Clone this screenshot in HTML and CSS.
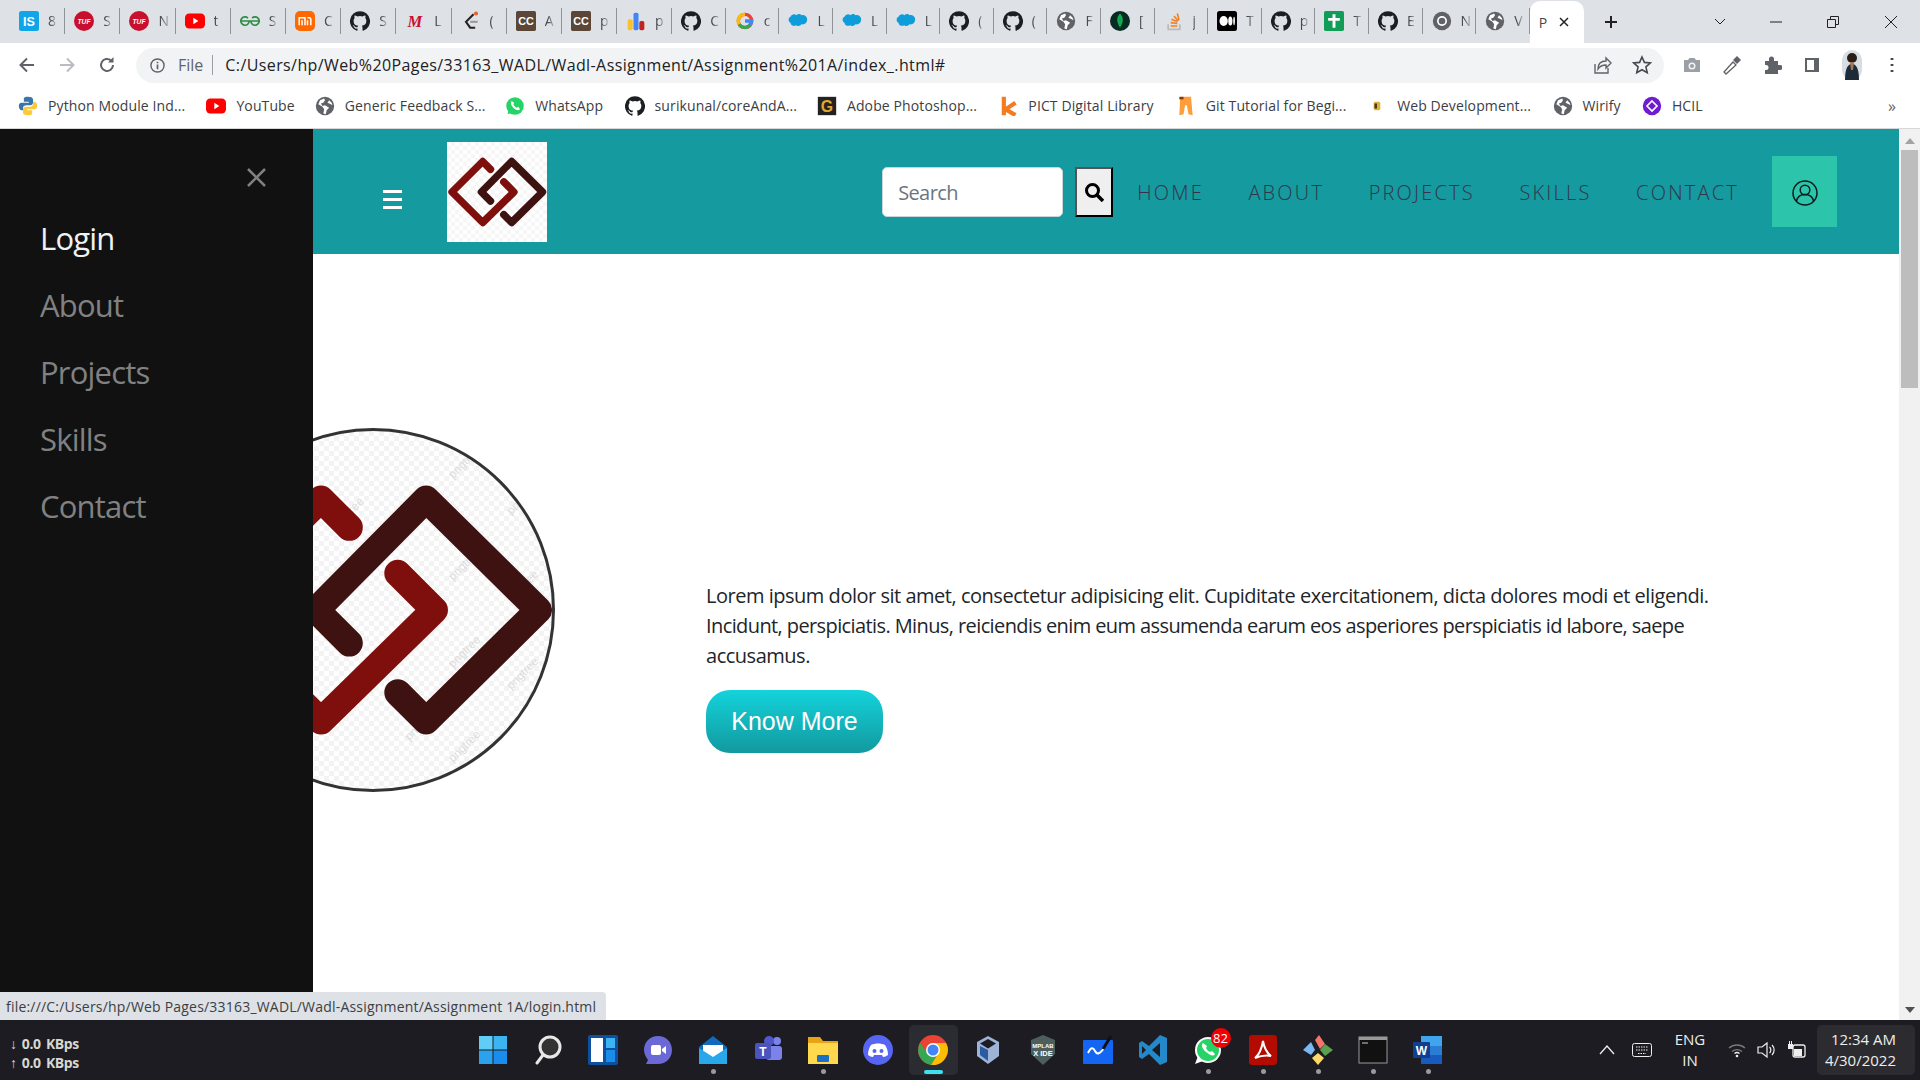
FILE: index.html
```html
<!DOCTYPE html>
<html lang="en">
<head>
<meta charset="utf-8">
<title>Portfolio</title>
<link rel="stylesheet" href="styles.css">
</head>
<body>
<svg class="defs" width="0" height="0" aria-hidden="true">
  <symbol id="gh" viewBox="0 0 24 24"><path fill="#1b1f23" d="M12 .3a12 12 0 0 0-3.8 23.4c.6.1.8-.3.8-.6v-2c-3.3.7-4-1.6-4-1.6-.6-1.4-1.4-1.8-1.4-1.8-1-.7.1-.7.1-.7 1.2 0 1.9 1.2 1.9 1.2 1 1.8 2.8 1.3 3.5 1 0-.8.4-1.3.7-1.6-2.7-.3-5.5-1.3-5.5-6 0-1.2.5-2.3 1.3-3.1-.2-.4-.6-1.6 0-3.2 0 0 1-.3 3.4 1.2a11.5 11.5 0 0 1 6 0c2.3-1.5 3.3-1.2 3.3-1.2.6 1.6.2 2.8 0 3.2.9.8 1.3 1.9 1.3 3.2 0 4.6-2.8 5.6-5.5 5.9.5.4.9 1 .9 2.2v3.3c0 .3.1.7.8.6A12 12 0 0 0 12 .3"/></symbol>
  <symbol id="globe" viewBox="0 0 24 24"><circle cx="12" cy="12" r="11" fill="#5f6368"/><path fill="#fff" d="M11 3 6 5 4 10l5 3 2 3-1 5 3 1 1-5 3-3-5-3-3 1-2-3 3-1 2-3zm6 2-2 3 4 2 2 1-1-3z"/></symbol>
  <symbol id="sf" viewBox="0 0 24 24"><path fill="#0d9dda" d="M10 5c2-2 5-2 6 0 3-1 7 1 7 5s-3 7-7 6c-1 2-4 3-6 1-3 2-7 0-7-3-3-1-3-6 0-7 1-3 5-4 7-2z"/></symbol>
  <symbol id="yt" viewBox="0 0 24 24"><rect y="3" width="24" height="18" rx="5" fill="#f00"/><path fill="#fff" d="m10 8 6 4-6 4z"/></symbol>
  <symbol id="logo" viewBox="0 0 100 100">
    <path fill="none" stroke="#3f1212" stroke-width="7.400" stroke-linecap="round" stroke-linejoin="round" d="M43.500 59.100 34.400 50 64.600 19.500 95.500 50 64.600 80.500 56.800 72.700"/>
    <path fill="none" stroke="#7f0f0c" stroke-width="7.400" stroke-linecap="round" stroke-linejoin="round" d="M56.800 39.900 66.900 50 35.700 80.500 5 50 35.700 19.500 43.500 27.300"/>
  </symbol>
</svg>

<header class="tabstrip">
  <div class="tab"><svg class="fav" viewBox="0 0 24 24"><rect width="24" height="24" rx="3" fill="#0ea5e9"/><text x="12" y="18" font-size="15" font-weight="700" fill="#fff" text-anchor="middle" font-family="Liberation Sans">IS</text></svg><span>8</span></div>
  <div class="tab"><svg class="fav" viewBox="0 0 24 24"><circle cx="12" cy="12" r="12" fill="#c8102e"/><text x="12" y="15" font-size="8" font-weight="700" font-style="italic" fill="#fff" text-anchor="middle" font-family="Liberation Sans">TUF</text></svg><span>S</span></div>
  <div class="tab"><svg class="fav" viewBox="0 0 24 24"><circle cx="12" cy="12" r="12" fill="#c8102e"/><text x="12" y="15" font-size="8" font-weight="700" font-style="italic" fill="#fff" text-anchor="middle" font-family="Liberation Sans">TUF</text></svg><span>N</span></div>
  <div class="tab"><svg class="fav"><use href="#yt"/></svg><span>t</span></div>
  <div class="tab"><svg class="fav" viewBox="0 0 24 24"><path d="M1 12h22M11 12a5 5 0 1 1-1.500-3.500M13 12a5 5 0 1 0 1.500-3.500" fill="none" stroke="#2f8d46" stroke-width="2"/></svg><span>S</span></div>
  <div class="tab"><svg class="fav" viewBox="0 0 24 24"><rect width="24" height="24" rx="6" fill="#ff6900"/><path d="M5 17V8h7v9M8.500 11v6M15 8h2a2 2 0 0 1 2 2v7M15 11v6" fill="none" stroke="#fff" stroke-width="1.800"/></svg><span>C</span></div>
  <div class="tab"><svg class="fav"><use href="#gh"/></svg><span>S</span></div>
  <div class="tab"><svg class="fav" viewBox="0 0 24 24"><text x="12" y="19" font-size="20" font-weight="700" font-style="italic" fill="#c8102e" text-anchor="middle" font-family="Liberation Serif">M</text></svg><span>L</span></div>
  <div class="tab"><svg class="fav" viewBox="0 0 24 24"><path d="M15 4 6 13l5 7h6" fill="none" stroke="#222" stroke-width="2.500"/><path d="M11 13h9" stroke="#999" stroke-width="2.500"/><circle cx="18" cy="3" r="2.500" fill="#e8632b"/></svg><span>(</span></div>
  <div class="tab"><svg class="fav" viewBox="0 0 24 24"><rect width="24" height="24" rx="2" fill="#5b4638"/><text x="12" y="17" font-size="13" font-weight="700" fill="#fff" text-anchor="middle" font-family="Liberation Sans">CC</text></svg><span>A</span></div>
  <div class="tab"><svg class="fav" viewBox="0 0 24 24"><rect width="24" height="24" rx="2" fill="#5b4638"/><text x="12" y="17" font-size="13" font-weight="700" fill="#fff" text-anchor="middle" font-family="Liberation Sans">CC</text></svg><span>p</span></div>
  <div class="tab"><svg class="fav" viewBox="0 0 24 24"><rect x="2" y="10" width="6" height="13" rx="2" fill="#fbc02d"/><rect x="9" y="2" width="6" height="21" rx="2" fill="#4285f4"/><rect x="16" y="12" width="6" height="11" rx="2" fill="#c5221f"/></svg><span>p</span></div>
  <div class="tab"><svg class="fav"><use href="#gh"/></svg><span>C</span></div>
  <div class="tab"><svg class="fav" viewBox="0 0 24 24"><circle cx="12" cy="12" r="8" fill="none" stroke="#ea4335" stroke-width="4"/><path d="M12 4a8 8 0 0 0-7 12" fill="none" stroke="#fbbc05" stroke-width="4"/><path d="M5 16a8 8 0 0 0 14-1" fill="none" stroke="#34a853" stroke-width="4"/><path d="M12 12h8a8 8 0 0 1-2 5" fill="none" stroke="#4285f4" stroke-width="4"/></svg><span>c</span></div>
  <div class="tab"><svg class="fav"><use href="#sf"/></svg><span>L</span></div>
  <div class="tab"><svg class="fav"><use href="#sf"/></svg><span>L</span></div>
  <div class="tab"><svg class="fav"><use href="#sf"/></svg><span>L</span></div>
  <div class="tab"><svg class="fav"><use href="#gh"/></svg><span>(</span></div>
  <div class="tab"><svg class="fav"><use href="#gh"/></svg><span>(</span></div>
  <div class="tab"><svg class="fav"><use href="#globe"/></svg><span>F</span></div>
  <div class="tab"><svg class="fav" viewBox="0 0 24 24"><circle cx="12" cy="12" r="12" fill="#062b23"/><path fill="#13aa52" d="M12 3c4 4 5 9 0 17-5-8-4-13 0-17z"/></svg><span>[</span></div>
  <div class="tab"><svg class="fav" viewBox="0 0 24 24"><path d="M5 16v6h14v-6" fill="none" stroke="#bcbbbb" stroke-width="2"/><path d="M8 18h8M8 14l8 1M9 10l7 3M12 6l5 6M16 3l2 8" stroke="#f48024" stroke-width="2"/></svg><span>j</span></div>
  <div class="tab"><svg class="fav" viewBox="0 0 24 24"><rect width="24" height="24" rx="3" fill="#000"/><ellipse cx="8" cy="12" rx="5" ry="6" fill="#fff"/><ellipse cx="16" cy="12" rx="2.500" ry="5.500" fill="#fff"/><ellipse cx="20.500" cy="12" rx="1" ry="5" fill="#fff"/></svg><span>T</span></div>
  <div class="tab"><svg class="fav"><use href="#gh"/></svg><span>p</span></div>
  <div class="tab"><svg class="fav" viewBox="0 0 24 24"><rect width="24" height="24" rx="2" fill="#0f9d58"/><path d="M12 4v16M5 10h14" stroke="#fff" stroke-width="3.500"/></svg><span>T</span></div>
  <div class="tab"><svg class="fav"><use href="#gh"/></svg><span>E</span></div>
  <div class="tab"><svg class="fav" viewBox="0 0 24 24"><circle cx="12" cy="12" r="11" fill="#5f6368"/><circle cx="12" cy="12" r="6" fill="#fff"/><circle cx="12" cy="12" r="4" fill="#5f6368"/></svg><span>N</span></div>
  <div class="tab"><svg class="fav"><use href="#globe"/></svg><span>V</span></div>
  <div class="tab-active"><span>P</span><svg class="close-x" viewBox="0 0 12 12"><path d="M2 2l8 8M10 2l-8 8" stroke="#202124" stroke-width="1.500"/></svg></div>
  <svg class="plus" viewBox="0 0 14 14"><path d="M7 1v12M1 7h12" stroke="#202124" stroke-width="2"/></svg>
  <div class="winctl">
    <svg class="w-chev" viewBox="0 0 12 8"><path d="M1 1l5 5 5-5" fill="none" stroke="#202124"/></svg>
    <svg class="w-min" viewBox="0 0 12 12"><path d="M0 6h12" stroke="#202124"/></svg>
    <svg class="w-max" viewBox="0 0 12 12"><path d="M.5 3.500h8v8h-8zM3.500 3.500v-3h8v8h-3" fill="none" stroke="#202124"/></svg>
    <svg class="w-close" viewBox="0 0 12 12"><path d="M0 0l12 12M12 0L0 12" stroke="#202124"/></svg>
  </div>
</header>

<nav class="toolbar">
  <svg class="tb-nav" viewBox="0 0 20 20"><path d="M17 10H4M10 3.500 3.500 10l6.500 6.500" fill="none" stroke="#5f6368" stroke-width="2"/></svg>
  <svg class="tb-nav" viewBox="0 0 20 20"><path d="M3 10h13M10 3.500l6.500 6.500-6.500 6.500" fill="none" stroke="#b9bcc0" stroke-width="2"/></svg>
  <svg class="tb-nav" viewBox="0 0 20 20"><path d="M16 10a6 6 0 1 1-2-4.500" fill="none" stroke="#5f6368" stroke-width="2"/><path d="M16.500 2v5.500H11z" fill="#5f6368"/></svg>
  <div class="omnibox">
    <svg class="info" viewBox="0 0 16 16"><circle cx="8" cy="8" r="7" fill="none" stroke="#5f6368" stroke-width="1.500"/><path d="M8 7v5M8 4v1.500" stroke="#5f6368" stroke-width="1.800"/></svg>
    <span class="scheme">File</span>
    <span class="url">C:/Users/hp/Web%20Pages/33163_WADL/Wadl-Assignment/Assignment%201A/index_.html#</span>
    <svg class="omni-ico share" viewBox="0 0 20 20"><path d="M3 9v9h13v-5" fill="none" stroke="#5f6368" stroke-width="1.400"/><path d="M6 14c0-5 3-8 8-8V3l5 5-5 5v-3c-4 0-6 1-8 4z" fill="none" stroke="#5f6368" stroke-width="1.400"/></svg>
    <svg class="omni-ico" viewBox="0 0 20 20"><path d="m10 2 2.400 5.400 5.900.6-4.400 3.900 1.300 5.800L10 14.700l-5.200 3 1.300-5.800L1.700 8l5.900-.6z" fill="none" stroke="#45494e" stroke-width="1.600"/></svg>
  </div>
  <div class="ext-row">
    <svg class="ext" viewBox="0 0 20 20"><path fill="#9aa0a6" d="M2 5h4l1.500-2h5L14 5h4v12H2z"/><circle cx="10" cy="11" r="3.500" fill="#f1f3f4"/><circle cx="10" cy="11" r="2" fill="#9aa0a6"/></svg>
    <svg class="ext" viewBox="0 0 20 20"><path d="M3 18 2 17l9-10 3 3-10 9z" fill="none" stroke="#5f6368" stroke-width="1.300"/><path d="m11 5 4-4 4 4-4 4z" fill="#5f6368"/></svg>
    <svg class="ext" viewBox="0 0 20 20"><path fill="#5f6368" d="M3 6h4V4a2.500 2.500 0 0 1 5 0v2h4v4h2a2.500 2.500 0 0 1 0 5h-2v4H3v-4h1a2.500 2.500 0 0 0 0-5H3z"/></svg>
    <svg class="ext" viewBox="0 0 20 20"><path fill="#5f6368" d="M3 3h14v14H3z"/><path fill="#fff" d="M5 5h7v10H5z"/></svg>
    <svg class="ext avatar" viewBox="0 0 20 30"><rect width="20" height="30" rx="10" fill="#d8dde2"/><circle cx="10" cy="8" r="5" fill="#2a1d18"/><path d="M3 30c0-12 3-16 7-16s7 4 7 16z" fill="#1d2b38"/><path d="M8 12h4l-1 8H9z" fill="#a5775a"/></svg>
    <svg class="ext" viewBox="0 0 20 20"><path d="M10 3v2M10 9v2M10 15v2" stroke="#45494e" stroke-width="2.800"/></svg>
  </div>
</nav>

<div class="bookmarks">
  <div class="bm bm-py"><svg class="bm-ico" viewBox="0 0 24 24"><path fill="#3776ab" d="M12 1c-5 0-5 2-5 3v3h6v1H4c-2 0-3 2-3 4s1 5 3 5h2v-3c0-2 2-3 4-3h5c1 0 3-1 3-3V4c0-2-3-3-6-3z"/><path fill="#fcc93a" d="M12 23c5 0 5-2 5-3v-3h-6v-1h9c2 0 3-2 3-4s-1-5-3-5h-2v3c0 2-2 3-4 3h-5c-1 0-3 1-3 3v4c0 2 3 3 6 3z"/></svg><span>Python Module Ind...</span></div>
  <div class="bm bm-yt"><svg class="bm-ico"><use href="#yt"/></svg><span>YouTube</span></div>
  <div class="bm bm-fb"><svg class="bm-ico"><use href="#globe"/></svg><span>Generic Feedback S...</span></div>
  <div class="bm bm-wa"><svg class="bm-ico" viewBox="0 0 24 24"><circle cx="12" cy="12" r="10.500" fill="#25d366"/><path d="m3 22 2-6 4 4z" fill="#25d366"/><path fill="#fff" d="M8 6c-2 2-1 5 2 8s6 4 8 2l-2-3-2 1c-2-1-3-2-4-4l1-2z"/></svg><span>WhatsApp</span></div>
  <div class="bm bm-gh"><svg class="bm-ico"><use href="#gh"/></svg><span>surikunal/coreAndA...</span></div>
  <div class="bm bm-ad"><svg class="bm-ico" viewBox="0 0 24 24"><rect x="1" y="1" width="22" height="22" fill="#222"/><text x="12" y="19" font-size="19" font-weight="700" fill="#e2a72e" text-anchor="middle" font-family="Liberation Sans">G</text></svg><span>Adobe Photoshop...</span></div>
  <div class="bm bm-pi"><svg class="bm-ico" viewBox="0 0 24 24"><path d="M7 1v22M21 8 9 16l12 7" fill="none" stroke="#f47b20" stroke-width="5"/></svg><span>PICT Digital Library</span></div>
  <div class="bm bm-git"><svg class="bm-ico" viewBox="0 0 24 24"><path fill="#ff9d3a" d="M5 1h13l2 22-5-1-2-11h-2L9 22l-5 1z"/><path fill="#7a3b10" d="M4 1h5v3H4z"/></svg><span>Git Tutorial for Begi...</span></div>
  <div class="bm bm-web"><svg class="bm-ico" viewBox="0 0 24 24"><rect x="8" y="7" width="8" height="10" rx="2" fill="#e0b23c"/><path d="M9 9h3v6H9z" fill="#4a3a1a"/></svg><span>Web Development...</span></div>
  <div class="bm bm-wi"><svg class="bm-ico"><use href="#globe"/></svg><span>Wirify</span></div>
  <div class="bm bm-hc"><svg class="bm-ico" viewBox="0 0 24 24"><circle cx="12" cy="12" r="11" fill="#6f1bd0"/><path d="m12 6 6 6-6 6-6-6z" fill="none" stroke="#fff" stroke-width="2"/></svg><span>HCIL</span></div>
  <span class="bm-more">»</span>
</div>

<div class="page">
  <aside class="sidebar">
    <svg class="side-close" viewBox="0 0 19 19"><path d="M1 1l17 17M18 1 1 18" stroke="#818181" stroke-width="2.500"/></svg>
    <a class="side-link side-active">Login</a>
    <a class="side-link">About</a>
    <a class="side-link">Projects</a>
    <a class="side-link">Skills</a>
    <a class="side-link">Contact</a>
  </aside>
  <main class="main">
    <div class="site-header">
      <div class="burger"><i></i><i></i><i></i></div>
      <div class="site-logo"><svg class="logo-svg" viewBox="0 0 100 100"><use href="#logo" width="100" height="100"/></svg></div>
      <form class="search">
        <div class="search-input">Search</div>
        <div class="search-btn"><svg viewBox="0 0 20 20" class="search-ico"><circle cx="8.500" cy="8.500" r="6" fill="none" stroke="#000" stroke-width="3"/><path d="m13 13 6 6" stroke="#000" stroke-width="3.500"/></svg></div>
      </form>
      <ul class="nav">
        <li>HOME</li><li>ABOUT</li><li>PROJECTS</li><li>SKILLS</li><li>CONTACT</li>
      </ul>
      <div class="user-box"><svg class="user-ico" viewBox="0 0 26 26"><circle cx="13" cy="13" r="12" fill="none" stroke="#0b1d1d" stroke-width="1.500"/><circle cx="13" cy="10" r="4.800" fill="none" stroke="#0b1d1d" stroke-width="1.500"/><path d="M4.500 21c1-4.500 4-6.500 8.500-6.500s7.500 2 8.500 6.500" fill="none" stroke="#0b1d1d" stroke-width="1.500"/></svg></div>
    </div>
    <section class="hero">
      <div class="hero-img">
        <svg class="logo-svg" viewBox="0.820 0.820 98.360 98.360">
          <g class="wm" font-size="3.200" font-family="Liberation Sans">
            <text transform="translate(12 18) rotate(-45)">pngtree</text>
            <text transform="translate(40 28) rotate(-45)">pngtree</text>
            <text transform="translate(72 14) rotate(-45)">pngtree</text>
            <text transform="translate(88 24) rotate(-45)">pngtree</text>
            <text transform="translate(72 42) rotate(-45)">pngtree</text>
            <text transform="translate(88 48) rotate(-45)">pngtree</text>
            <text transform="translate(72 66) rotate(-45)">pngtree</text>
            <text transform="translate(44 70) rotate(-45)">pngtree</text>
            <text transform="translate(88 72) rotate(-45)">pngtree</text>
            <text transform="translate(60 86) rotate(-45)">pngtree</text>
            <text transform="translate(72 92) rotate(-45)">pngtree</text>
          </g>
          <use href="#logo" width="100" height="100"/>
        </svg>
      </div>
      <div class="hero-text">
        <p class="hero-p">Lorem ipsum dolor sit amet, consectetur adipisicing elit. Cupiditate exercitationem, dicta dolores modi et eligendi.<br><span class="hero-tight">Incidunt, perspiciatis. Minus, reiciendis enim eum assumenda earum eos asperiores perspiciatis id labore, saepe</span><br>accusamus.</p>
        <a class="hero-btn">Know More</a>
      </div>
    </section>
  </main>
  <div class="scrollbar">
    <i class="arrow-up"></i>
    <div class="thumb"></div>
    <i class="arrow-down"></i>
  </div>
  <div class="status">file:///C:/Users/hp/Web Pages/33163_WADL/Wadl-Assignment/Assignment 1A/login.html</div>
</div>

<footer class="taskbar">
  <div class="netspeed"><span>↓ 0.0 KBps</span><span>↑ 0.0 KBps</span></div>
  <div class="tb-icons">
    <div class="ti"><svg viewBox="0 0 30 30"><path fill="#5fcdf5" d="M1 1h13.500v13.500H1z"/><path fill="#3db4f2" d="M15.500 1H29v13.500H15.500z"/><path fill="#2aa2ee" d="M1 15.500h13.500V29H1z"/><path fill="#1a8ceb" d="M15.500 15.500H29V29H15.500z"/></svg></div>
    <div class="ti"><svg viewBox="0 0 30 30"><circle cx="17" cy="12" r="10" fill="#333" stroke="#e8e8e8" stroke-width="3"/><path d="M10 20 4 28" stroke="#e8e8e8" stroke-width="3" stroke-linecap="round"/></svg></div>
    <div class="ti"><svg viewBox="0 0 30 30"><rect width="30" height="30" rx="2" fill="#0e4f9e"/><rect x="3" y="3" width="12" height="24" fill="#fff"/><rect x="18" y="3" width="9" height="10" fill="#3db4f2"/><rect x="18" y="15" width="9" height="12" fill="#1a8ceb"/></svg></div>
    <div class="ti"><svg viewBox="0 0 30 30"><path fill="#6b69d6" d="M15 1c8 0 14 6 14 14s-6 14-14 14H3l2-4c-2-3-4-6-4-10C1 7 7 1 15 1z"/><rect x="8" y="10" width="10" height="10" rx="2" fill="#fff"/><path fill="#fff" d="m19 14 4-3v8l-4-3z"/></svg></div>
    <div class="ti"><svg viewBox="0 0 30 30"><path fill="#0f6cbd" d="M15 1 29 12v17H1V12z"/><path fill="#fff" d="M5 10h20v8l-10 6-10-6z"/><path fill="#28a8ea" d="m1 13 14 9 14-9v16H1z"/></svg></div>
    <div class="ti"><svg viewBox="0 0 30 30"><circle cx="24" cy="6" r="4" fill="#7b83eb"/><circle cx="16" cy="6" r="5" fill="#5059c9"/><rect x="13" y="11" width="16" height="14" rx="3" fill="#7b83eb"/><rect x="2" y="8" width="16" height="16" rx="2" fill="#4b53bc"/><text x="10" y="21" font-size="12" font-weight="700" fill="#fff" text-anchor="middle" font-family="Liberation Sans">T</text></svg></div>
    <div class="ti"><svg viewBox="0 0 30 30"><path fill="#e8a317" d="M0 2h12l3 4h15v6H0z"/><path fill="#ffd84d" d="M0 8h30v21H0z"/><rect x="9" y="20" width="12" height="7" rx="1" fill="#1a6fc9"/></svg></div>
    <div class="ti"><svg viewBox="0 0 30 30"><circle cx="15" cy="15" r="15" fill="#5865f2"/><path fill="#fff" d="M8 10c4-2 10-2 14 0 2 3 3 6 3 10-2 1-3 2-5 2l-1-2h-8l-1 2c-2 0-3-1-5-2 0-4 1-7 3-10z"/><circle cx="11.500" cy="16" r="2" fill="#5865f2"/><circle cx="18.500" cy="16" r="2" fill="#5865f2"/></svg></div>
    <div class="ti ti-active"><svg viewBox="0 0 30 30"><circle cx="15" cy="15" r="15" fill="#ea4335"/><path fill="#34a853" d="M2 8a15 15 0 0 0 11 22l7-11H10z"/><path fill="#fbbc05" d="M28 8H15v7l5 4-7 11a15 15 0 0 0 15-22z"/><circle cx="15" cy="15" r="7" fill="#fff"/><circle cx="15" cy="15" r="5.500" fill="#4285f4"/></svg></div>
    <div class="ti"><svg viewBox="0 0 30 30"><path d="m15 1 11 6v14l-11 8-11-8V7z" fill="#9db4d6"/><path d="m15 4 8 4.500-8 5-8-5z" fill="#1c1c22"/><path d="M15 15v11l-8-6v-9z" fill="#2c5aa0"/></svg></div>
    <div class="ti"><svg viewBox="0 0 30 30"><path d="m15 0 12 5v14l-12 11L3 19V5z" fill="#4d5f5d"/><text x="15" y="13" font-size="6" font-weight="700" fill="#fff" text-anchor="middle" font-family="Liberation Sans">MPLAB</text><text x="15" y="21" font-size="7.500" font-weight="700" fill="#fff" text-anchor="middle" font-family="Liberation Sans">X IDE</text></svg></div>
    <div class="ti"><svg viewBox="0 0 30 30"><rect y="5" width="30" height="24" rx="1" fill="#1466f2"/><path d="M5 18c3-6 5-6 7-2s5 3 9-3" fill="none" stroke="#fff" stroke-width="2"/><path d="m20 14 8-13" stroke="#111" stroke-width="3"/></svg></div>
    <div class="ti"><svg viewBox="0 0 30 30"><path fill="#2489ca" d="M22 0 29 3v24l-7 3-11-11-7 5-3-2V8l3-2 7 5z"/><path fill="#1c1c22" d="M22 8v14l-8-7z"/><path fill="#1c1c22" d="m4 11 4 4-4 4z"/></svg></div>
    <div class="ti ti-wa"><svg viewBox="0 0 30 30"><circle cx="15" cy="15" r="13" fill="#fff"/><circle cx="15" cy="15" r="11" fill="#25d366"/><path d="m2 29 3-8 5 5z" fill="#fff"/><path fill="#fff" d="M10 8c-2 2-1 6 3 9s7 5 9 2l-3-3-2 1c-2-1-3-2-4-4l1-2z"/></svg><b class="badge">82</b></div>
    <div class="ti"><svg viewBox="0 0 30 30"><rect x="1" width="28" height="30" rx="3" fill="#b30b00"/><path d="M15 6c-1 6-3 13-8 17 5-2 11-3 16-2-4-3-7-9-8-15z" fill="none" stroke="#fff" stroke-width="2"/></svg></div>
    <div class="ti"><svg viewBox="0 0 30 30"><path fill="#f4736b" d="m16 0 6 9-5 5-5-9z"/><path fill="#7ab8f5" d="m8 7 4 8-4 5-8-5z"/><path fill="#59a14f" d="m22 9 8 6-8 6-5-6z"/><path fill="#ffd967" d="m15 18 6 5-6 7-6-7z"/></svg></div>
    <div class="ti"><svg viewBox="0 0 30 30"><rect x="1" y="2" width="28" height="26" fill="#111" stroke="#999"/><path d="M1 2h28v3H1z" fill="#999"/><path d="M4 8h6" stroke="#ccc"/></svg></div>
    <div class="ti"><svg viewBox="0 0 30 30"><path fill="#41a5ee" d="M8 1h21v10H8z"/><path fill="#2b7cd3" d="M8 11h21v9H8z"/><path fill="#185abd" d="M8 20h21v9H8z"/><rect y="7" width="17" height="16" rx="1" fill="#103f91"/><text x="8.500" y="20" font-size="12" font-weight="700" fill="#fff" text-anchor="middle" font-family="Liberation Sans">W</text></svg></div>
  </div>
  <div class="tray">
    <svg class="tr-ico" viewBox="0 0 18 18"><path d="m2 13 7-8 7 8" fill="none" stroke="#eee" stroke-width="1.300"/></svg>
    <svg class="tr-ico kbd" viewBox="0 0 20 18"><rect x=".5" y="2.500" width="19" height="13" rx="2" fill="none" stroke="#eee"/><path d="M4 6h12M4 9h12M6 12.500h8" stroke="#eee" stroke-dasharray="1.500 1"/></svg>
    <div class="lang"><span>ENG</span><span>IN</span></div>
    <svg class="tr-ico wifi" viewBox="0 0 20 18"><path d="M2 7a12 12 0 0 1 16 0M5 10.500a8 8 0 0 1 10 0" fill="none" stroke="#777" stroke-width="1.400"/><path d="M7.500 12.500a4 4 0 0 1 5 0" fill="none" stroke="#eee" stroke-width="1.400"/><circle cx="10" cy="15" r="1.300" fill="#eee"/></svg>
    <svg class="tr-ico vol" viewBox="0 0 20 18"><path d="M1 6h4l5-4v14l-5-4H1z" fill="none" stroke="#eee" stroke-width="1.200"/><path d="M12.500 6a4 4 0 0 1 0 6M15 4a7 7 0 0 1 0 10" fill="none" stroke="#eee" stroke-width="1.200"/></svg>
    <svg class="tr-ico batt" viewBox="0 0 20 18"><rect x="6" y="4" width="12" height="12" rx="2" fill="none" stroke="#eee" stroke-width="1.300"/><path fill="#eee" d="M7 8h8v7H7zM1 3h5v5H1zM2 0h1v3H2zM4 0h1v3H4z"/></svg>
    <div class="clock"><span>12:34 AM</span><span>4/30/2022</span></div>
  </div>
</footer>
</body>
</html>
```
FILE: styles.css
```css
* { box-sizing: border-box; }
html, body { margin: 0; height: 100%; overflow: hidden; }
body { width: 1920px; height: 1080px; display: flex; flex-direction: column; font-family: "Open Sans", "Noto Sans", sans-serif; background: #fff; color: #202124; }
.defs { position: absolute; }
a { display: block; }

/* Browser tab strip */
.tabstrip { height: 43px; background: #dee1e6; display: flex; align-items: center; padding-left: 10px; flex: none; }
.tab { width: 53.6px; height: 26px; display: flex; align-items: center; gap: 9px; padding-left: 9px; border-right: 1px solid #8f9297; font-size: 14px; color: #45484d; flex: none; margin-top: -2px; }
.tab:nth-child(-n+12) { width: 55.2px; }
.tab span { -webkit-mask-image: linear-gradient(90deg, #000 30%, rgba(0,0,0,.25)); mask-image: linear-gradient(90deg, #000 30%, rgba(0,0,0,.25)); }
.fav { width: 20px; height: 20px; flex: none; }
.tab-active { width: 54px; height: 43px; background: #fff; border-radius: 10px 10px 0 0; display: flex; align-items: center; gap: 11px; padding-left: 9px; font-size: 14px; color: #45484d; flex: none; margin-top: 1px; }
.close-x { width: 12px; height: 12px; }
.plus { width: 14px; height: 14px; margin-left: 20px; }
.winctl { margin-left: auto; display: flex; align-items: center; padding-right: 23px; }
.winctl svg { height: 12px; width: 12px; }
.w-min { margin-left: 44px; }
.w-max { margin-left: 45px; }
.w-close { margin-left: 46px; }

/* Browser toolbar */
.toolbar { height: 42px; background: #fff; display: flex; align-items: center; padding-left: 17px; flex: none; padding-top: 2px; }
.tb-nav { width: 20px; height: 20px; margin-right: 20px; flex: none; }
.omnibox { width: 1528px; height: 35px; margin-left: -1px; background: #f1f3f4; border-radius: 18px; display: flex; align-items: center; padding-left: 14px; padding-right: 12px; flex: none; }
.info { width: 15px; height: 15px; flex: none; }
.scheme { font-size: 16px; color: #5f6368; margin-left: 13px; padding-right: 9px; border-right: 1px solid #9aa0a6; line-height: 20px; }
.url { font-size: 16px; letter-spacing: .4px; color: #202124; margin-left: 12px; white-space: nowrap; }
.omni-ico { width: 20px; height: 20px; flex: none; margin-left: 20px; }
.share { margin-left: auto; }
.ext-row { display: flex; align-items: center; margin-left: 18px; }
.ext { width: 20px; height: 20px; margin-right: 20px; flex: none; }
.avatar { height: 30px; }

/* Bookmarks */
.bookmarks { height: 44px; background: #fff; display: flex; align-items: center; border-bottom: 1px solid #d5d7da; flex: none; font-size: 14px; letter-spacing: .12px; color: #3c4043; padding: 0 0 2px 18px; white-space: nowrap; }
.bm { display: flex; align-items: center; gap: 10px; flex: none; margin-right: 20.4px; }
.bm-ico { width: 20px; height: 20px; flex: none; }
.bm span { display: block; }
.bm-py span { width: 138px; }
.bm-yt span { width: 58px; }
.bm-fb span { width: 140px; }
.bm-wa span { width: 69px; }
.bm-gh span { width: 142px; }
.bm-ad span { width: 131px; }
.bm-pi span { width: 127px; }
.bm-git span { width: 141px; }
.bm-web span { width: 135px; }
.bm-wi span { width: 39px; }
.bm-hc span { width: 31px; }
.bm-more { margin-left: auto; margin-right: 24px; font-size: 16px; color: #5f6368; }

/* Page */
.page { flex: 1; min-height: 0; display: flex; position: relative; overflow: hidden; }
.sidebar { width: 313px; flex: none; background: #111; position: relative; z-index: 2; padding: 39px 0 0 40px; display: flex; flex-direction: column; }
.side-close { width: 19px; height: 19px; align-self: flex-start; margin-left: 207px; margin-bottom: 18px; flex: none; }
.side-link { font-size: 31px; letter-spacing: -.8px; line-height: 67px; color: #818181; flex: none; }
.side-active { color: #f1f1f1; }
.main { flex: 1; min-width: 0; display: flex; flex-direction: column; }
.site-header { height: 125px; background: #149a9f; display: flex; align-items: center; padding: 0 62px 0 70px; flex: none; }
.burger { width: 19px; margin-top: 15px; display: flex; flex-direction: column; gap: 5px; flex: none; }
.burger i { display: block; height: 3px; background: #fff; }
.site-logo { width: 100px; height: 100px; margin-left: 45px; background: repeating-conic-gradient(#f6f6f6 0 25%, #fff 0 50%) 0 0/8px 8px; flex: none; }
.logo-svg { width: 100%; height: 100%; display: block; }
.search { display: flex; margin-left: auto; gap: 12px; flex: none; }
.search-input { width: 181px; height: 50px; background: #fff; border: 1px solid #ced4da; border-radius: 5px; font-size: 20px; letter-spacing: -.6px; line-height: 50px; padding-left: 15px; color: #6c757d; }
.search-btn { width: 38px; height: 50px; background: #efefef; border: 2px outset #000; display: flex; align-items: center; justify-content: center; }
.search-ico { width: 20px; height: 20px; }
.nav { list-style: none; margin: 2px 0 0 24px; padding: 0; display: flex; gap: 44.5px; font-size: 20px; font-weight: 300; letter-spacing: 2.2px; color: #34354a; flex: none; }
.user-box { width: 65px; height: 71px; margin-left: 33px; background: #2cc4ab; display: flex; align-items: center; justify-content: center; flex: none; }
.user-ico { width: 26px; height: 26px; margin-top: 2px; }
.hero { flex: 1; min-height: 0; display: flex; align-items: flex-start; }
.hero-img { width: 364px; height: 364px; margin: 174px 0 0 -122px; border-radius: 50%; border: 3px solid #333; overflow: hidden; flex: none; background: repeating-conic-gradient(#f3f3f3 0 25%, #fff 0 50%) 0 0/10px 10px; }
.wm { fill: #dcdcdc; }
.hero-text { margin: 327px 0 0 151px; flex: none; }
.hero-p { margin: 0 0 19px; font-size: 20px; letter-spacing: -.48px; line-height: 30px; color: #212529; white-space: nowrap; }
.hero-tight { letter-spacing: -.6px; }
.hero-btn { width: 177px; height: 63px; border-radius: 24px; background: linear-gradient(#14d3db, #12999f); color: #fff; font-family: "Liberation Sans", sans-serif; font-size: 25px; line-height: 63px; text-align: center; }
.scrollbar { width: 21px; background: #f1f1f1; flex: none; display: flex; flex-direction: column; align-items: center; padding-top: 9px; padding-bottom: 7px; }
.arrow-up { width: 0; height: 0; border: 5px solid transparent; border-top: 0; border-bottom: 6px solid #a3a3a3; }
.thumb { width: 17px; height: 238px; background: #bdbdbd; margin-top: 6px; }
.arrow-down { width: 0; height: 0; border: 5px solid transparent; border-bottom: 0; border-top: 6px solid #505050; margin-top: auto; }
.status { position: absolute; left: 0; bottom: 0; width: 606px; height: 28px; z-index: 3; background: #dee1e6; border-top-right-radius: 4px; font-size: 14px; letter-spacing: .2px; line-height: 30px; padding-left: 6px; color: #3c4043; white-space: nowrap; overflow: hidden; }

/* Taskbar */
.taskbar { height: 60px; background: #1c1c22; display: grid; grid-template-columns: 1fr auto 1fr; align-items: center; flex: none; color: #eee; }
.netspeed { display: flex; flex-direction: column; font-size: 14px; font-weight: 700; letter-spacing: -.4px; word-spacing: 2px; line-height: 19px; padding: 5px 0 0 10px; color: #d8d8d0; }
.tb-icons { display: flex; margin-left: 1px; }
.ti { width: 55px; height: 60px; display: flex; align-items: center; justify-content: center; position: relative; }
.ti svg { width: 30px; height: 30px; }
.ti:nth-child(5)::after, .ti:nth-child(7)::after, .ti:nth-child(14)::after, .ti:nth-child(15)::after, .ti:nth-child(16)::after, .ti:nth-child(17)::after, .ti:nth-child(18)::after { content: ""; position: absolute; left: 25px; bottom: 6px; width: 5px; height: 5px; border-radius: 50%; background: #9a9a9a; }
.ti-active::before { content: ""; position: absolute; left: 3px; right: 3px; top: 5px; bottom: 5px; background: #2b2b32; border-radius: 5px; }
.ti-active svg { position: relative; }
.ti-active::after { content: ""; position: absolute; left: 18px; bottom: 6px; width: 19px; height: 4px; border-radius: 2px; background: #3ce0f0; }
.badge { position: absolute; left: 30px; top: 8px; width: 20px; height: 20px; border-radius: 50%; background: #f10000; color: #fff; font-size: 13px; font-weight: 400; line-height: 20px; text-align: center; }
.tray { display: flex; align-items: center; justify-content: flex-end; padding-right: 5px; }
.tr-ico { width: 18px; height: 18px; flex: none; }
.kbd { width: 20px; margin-left: 16px; }
.lang { display: flex; flex-direction: column; align-items: center; font-size: 15px; line-height: 21px; margin-left: 21px; width: 34px; }
.wifi { width: 20px; margin-left: 20px; }
.vol { width: 20px; margin-left: 10px; }
.batt { width: 20px; margin-left: 10px; }
.clock { width: 98px; height: 50px; margin-left: 10px; background: #2b2b30; border-radius: 5px; display: flex; flex-direction: column; justify-content: center; align-items: flex-end; padding-right: 19px; font-size: 15px; line-height: 21px; }
.clock span { white-space: nowrap; }
```
